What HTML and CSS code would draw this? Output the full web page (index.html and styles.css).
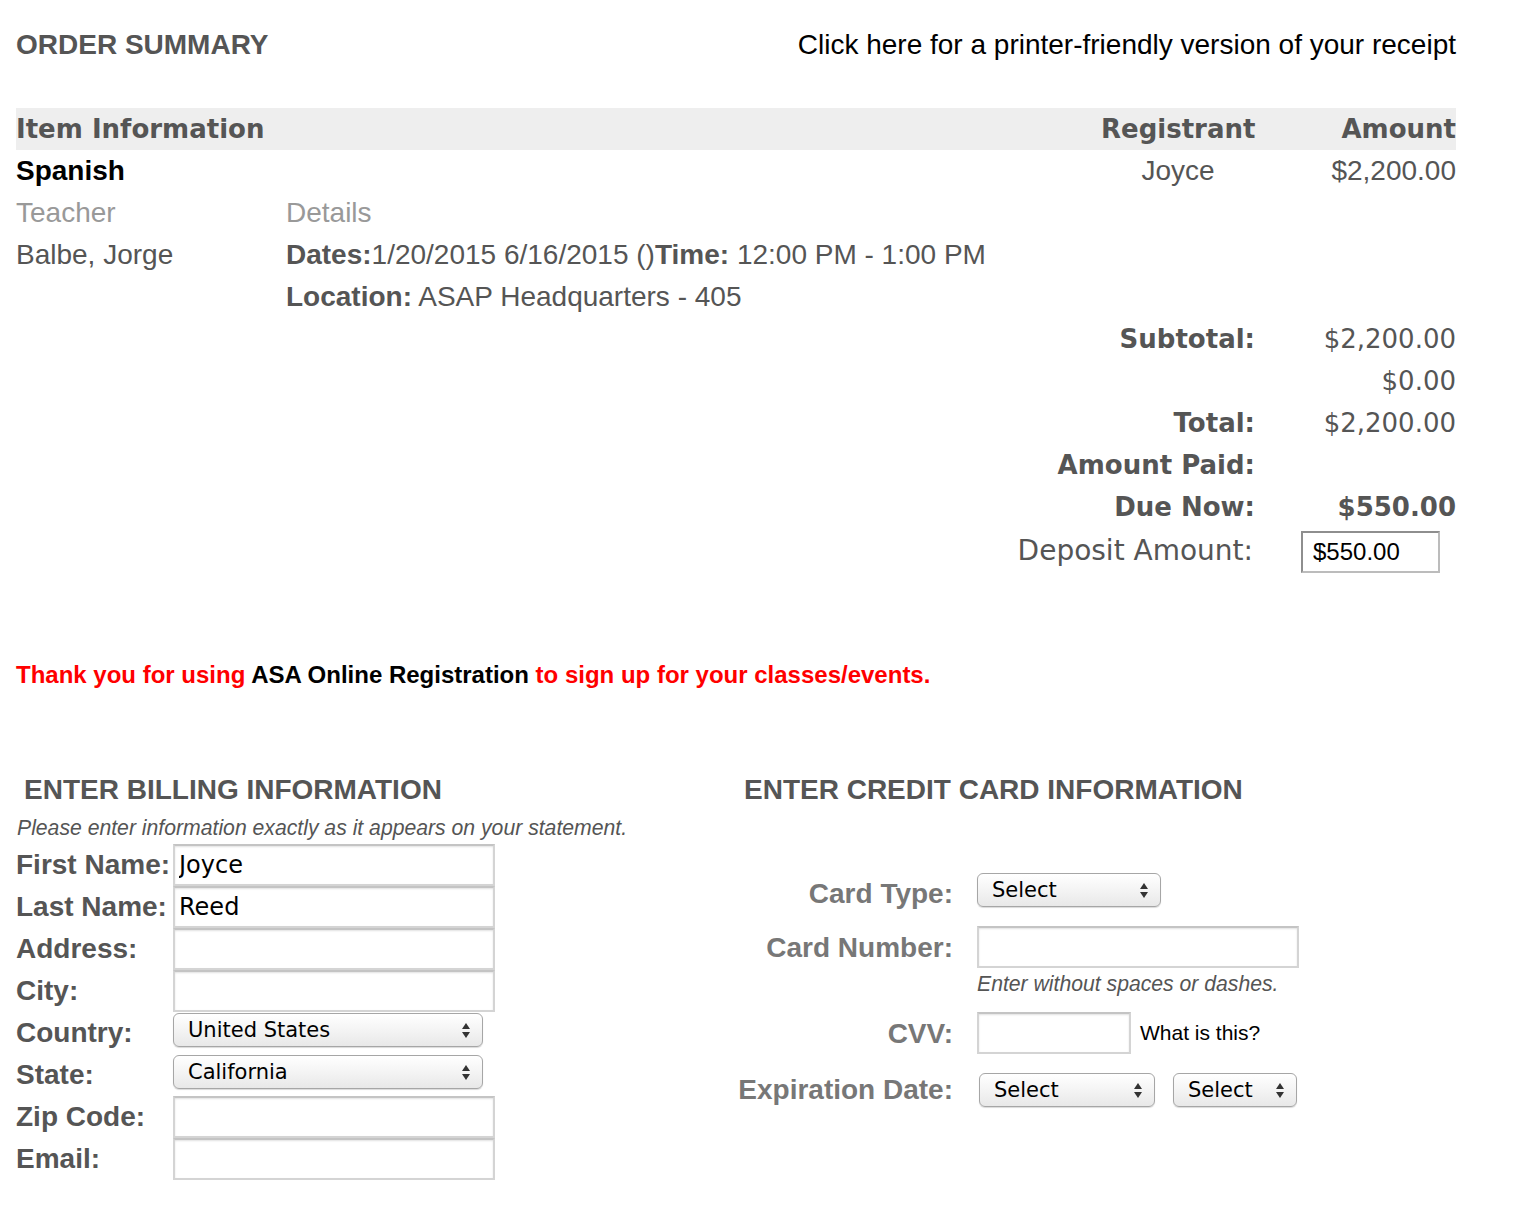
FILE: index.html
```html
<!DOCTYPE html>
<html lang="en">
<head>
    <meta charset="UTF-8">
    <title>Order Summary</title>
    <link rel="stylesheet" href="styles.css">
</head>
<body>
<div class="page">

    <div class="summary-head">
        <h1>ORDER SUMMARY</h1>
        <a href="#" class="print-link">Click here for a printer-friendly version of your receipt</a>
    </div>

    <table class="order">
        <colgroup>
            <col class="col-teacher">
            <col class="col-details">
            <col class="col-registrant">
            <col class="col-amount">
        </colgroup>
        <tr class="order-head">
            <th colspan="2" class="left">Item Information</th>
            <th class="right">Registrant</th>
            <th class="right">Amount</th>
        </tr>
        <tr>
            <td colspan="2" class="item-name">Spanish</td>
            <td class="center">Joyce</td>
            <td class="right">$2,200.00</td>
        </tr>
        <tr class="muted">
            <td>Teacher</td>
            <td colspan="3">Details</td>
        </tr>
        <tr>
            <td>Balbe, Jorge</td>
            <td colspan="3"><b>Dates:</b>1/20/2015 6/16/2015 ()<b>Time:</b> 12:00 PM - 1:00 PM</td>
        </tr>
        <tr>
            <td></td>
            <td colspan="3"><b>Location:</b> ASAP Headquarters - 405</td>
        </tr>
        <tr class="total">
            <th colspan="3">Subtotal:</th>
            <td>$2,200.00</td>
        </tr>
        <tr class="total">
            <th colspan="3"></th>
            <td>$0.00</td>
        </tr>
        <tr class="total">
            <th colspan="3">Total:</th>
            <td>$2,200.00</td>
        </tr>
        <tr class="total">
            <th colspan="3">Amount Paid:</th>
            <td></td>
        </tr>
        <tr class="total">
            <th colspan="3">Due Now:</th>
            <td class="due">$550.00</td>
        </tr>
        <tr class="deposit">
            <td colspan="3" class="deposit-label">Deposit Amount:</td>
            <td class="right"><input type="text" class="deposit-input" value="$550.00"></td>
        </tr>
    </table>

    <p class="thanks">Thank you for using <span class="brand">ASA Online Registration</span> to sign up for your classes/events.</p>

    <div class="payment">
        <div class="billing">
            <h2>ENTER BILLING INFORMATION</h2>
            <p class="note">Please enter information exactly as it appears on your statement.</p>
            <div class="bill-form">
                <label>First Name:</label>
                <input type="text" class="field" value="Joyce">
                <label>Last Name:</label>
                <input type="text" class="field" value="Reed">
                <label>Address:</label>
                <input type="text" class="field">
                <label>City:</label>
                <input type="text" class="field">
                <label>Country:</label>
                <span class="select-wrap sel-wide"><select><option>United States</option></select></span>
                <label>State:</label>
                <span class="select-wrap sel-wide"><select><option>California</option></select></span>
                <label>Zip Code:</label>
                <input type="text" class="field">
                <label>Email:</label>
                <input type="text" class="field">
            </div>
        </div>

        <div class="card">
            <h2>ENTER CREDIT CARD INFORMATION</h2>
            <div class="cc-row cc-type">
                <label>Card Type:</label>
                <span class="select-wrap sel-card"><select><option>Select</option></select></span>
            </div>
            <div class="cc-row cc-number">
                <label>Card Number:</label>
                <input type="text" class="field">
            </div>
            <div class="cc-row cc-hint">
                <span></span>
                <span class="note">Enter without spaces or dashes.</span>
            </div>
            <div class="cc-row cc-cvv">
                <label>CVV:</label>
                <span class="cvv-line"><input type="text" class="field cvv"><a href="#" class="what">What is this?</a></span>
            </div>
            <div class="cc-row cc-exp">
                <label>Expiration Date:</label>
                <span class="exp-line">
                    <span class="select-wrap sel-month"><select><option>Select</option></select></span>
                    <span class="select-wrap sel-year"><select><option>Select</option></select></span>
                </span>
            </div>
        </div>
    </div>

</div>
</body>
</html>
```

FILE: styles.css
```css
body {
    margin: 0;
    font-family: "Liberation Sans", Arial, Helvetica, sans-serif;
    color: #555;
    background: #fff;
}
.page {
    width: 1440px;
    padding: 24px 16px 40px 16px;
}

/* order summary */
.summary-head {
    display: flex;
    justify-content: space-between;
    align-items: center;
    height: 42px;
    margin-bottom: 42px;
}
.summary-head h1 {
    margin: 0;
    font-size: 28px;
    font-weight: bold;
    color: #555;
}
.print-link {
    color: #000;
    text-decoration: none;
    font-size: 28px;
}
.order {
    width: 1440px;
    border-collapse: collapse;
    table-layout: fixed;
    font-size: 28px;
}
.col-teacher { width: 270px; }
.col-registrant { width: 154px; }
.col-amount { width: 201px; }
.order td, .order th {
    padding: 0;
    height: 42px;
    line-height: 42px;
    white-space: nowrap;
}
.order-head th {
    background: #eee;
    font-family: "DejaVu Sans", Verdana, sans-serif;
    font-size: 26px;
    font-weight: bold;
}
.left { text-align: left; }
.right { text-align: right; }
.center { text-align: center; }
.item-name {
    color: #000;
    font-weight: bold;
}
.muted td {
    color: #999;
}
.total th {
    text-align: right;
    font-family: "DejaVu Sans", Verdana, sans-serif;
    font-size: 26px;
    font-weight: bold;
}
.total td {
    text-align: right;
    font-family: "DejaVu Sans", Verdana, sans-serif;
    font-size: 26px;
}
.total td.due {
    font-weight: bold;
}
.deposit td {
    height: 44px;
    line-height: 44px;
}
.deposit-label {
    text-align: right;
    font-family: "DejaVu Sans", Verdana, sans-serif;
    font-size: 28px;
    padding-right: 2px !important;
}
.deposit-input {
    width: 139px;
    height: 42px;
    box-sizing: border-box;
    margin: 1px 16px 0 0;
    vertical-align: middle;
    padding: 0 10px;
    border: 2px solid;
    border-color: #8e8e8e #bcbcbc #bcbcbc #8e8e8e;
    font-family: "Liberation Sans", Arial, sans-serif;
    font-size: 24px;
    color: #000;
}

.thanks {
    margin: 87px 0 0 0;
    line-height: 30px;
    font-size: 24px;
    font-weight: bold;
    color: #f00;
}
.thanks .brand {
    color: #000;
}

/* billing + card */
.payment {
    display: flex;
    margin-top: 82px;
}
.payment h2 {
    margin: 0;
    line-height: 36px;
    font-size: 28px;
    font-weight: bold;
    color: #555;
}
.billing {
    width: 714px;
}
.billing h2 {
    padding-left: 8px;
}
.note {
    margin: 4px 0 0 1px;
    line-height: 32px;
    font-size: 21.2px;
    font-style: italic;
    color: #555;
}
.bill-form {
    display: grid;
    grid-template-columns: 157px 322px;
    grid-auto-rows: 42px;
}
.bill-form label, .card label {
    font-size: 28px;
    font-weight: bold;
    line-height: 41px;
    white-space: nowrap;
}
.field {
    height: 42px;
    box-sizing: border-box;
    margin: 0;
    padding: 0 4px;
    border: 2px solid #d4d4d4;
    border-top-color: #c4c4c4;
    box-shadow: inset 0 1px 2px rgba(0, 0, 0, 0.12);
    font-family: "DejaVu Sans", "Lucida Grande", sans-serif;
    font-size: 24px;
    color: #000;
    background: #fff;
}
.bill-form .field {
    width: 322px;
}

.select-wrap {
    position: relative;
    display: inline-block;
    align-self: start;
    margin-top: 1px;
}
.select-wrap select {
    appearance: none;
    -webkit-appearance: none;
    width: 100%;
    height: 34px;
    margin: 0;
    padding: 0 30px 0 14px;
    border: 1px solid #a6a6a6;
    border-radius: 6px;
    background: linear-gradient(to bottom, #ffffff, #f4f4f4 50%, #e8e8e8);
    box-shadow: 0 1px 1px rgba(0, 0, 0, 0.15);
    font-family: "DejaVu Sans", "Lucida Grande", sans-serif;
    font-size: 21px;
    color: #000;
}
.select-wrap::before,
.select-wrap::after {
    content: "";
    position: absolute;
    right: 13px;
    border-left: 4px solid transparent;
    border-right: 4px solid transparent;
    pointer-events: none;
}
.select-wrap::before {
    top: 10px;
    border-bottom: 6px solid #333;
}
.select-wrap::after {
    top: 19px;
    border-top: 6px solid #333;
}
.sel-wide { width: 310px; }
.sel-card { width: 184px; }
.sel-month { width: 176px; }
.sel-year { width: 124px; }

.card {
    flex: 1;
}
.card h2 {
    padding-left: 14px;
    margin-bottom: 65px;
}
.cc-row {
    display: grid;
    grid-template-columns: 223px 1fr;
    column-gap: 24px;
    align-items: center;
}
.card label {
    text-align: right;
    color: #777;
}
.cc-type { height: 36px; }
.cc-type .select-wrap { margin-top: 0; }
.cc-number { margin-top: 17px; }
.cc-number .field { width: 322px; }
.cc-hint .note {
    margin: 0;
}
.cc-cvv { margin-top: 12px; }
.cvv-line {
    display: flex;
    align-items: center;
}
.field.cvv {
    width: 154px;
}
.what {
    margin-left: 9px;
    color: #000;
    text-decoration: none;
    font-size: 21px;
}
.cc-exp {
    margin-top: 15px;
    height: 36px;
}
.exp-line {
    display: flex;
    gap: 18px;
    padding-left: 2px;
}
.exp-line .select-wrap { margin-top: 0; }
```
